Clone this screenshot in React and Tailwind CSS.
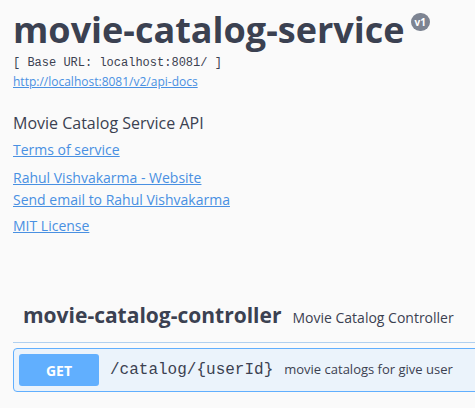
const sans = { fontFamily: '"Open Sans", sans-serif' };

const Link = ({ children, className = '' }) => (
  <a href="#" className={`text-[#4990e2] underline ${className}`}>
    {children}
  </a>
);

export default function App() {
  return (
    <div className="min-h-[408px] w-[475px] overflow-hidden bg-[#fafafa] text-[#3b4151] font-['Open_Sans',sans-serif]">
      <div className="pl-[13px] pt-[8px]">
        <div className="flex items-start">
          <h1 className="text-[36px] font-bold leading-[44px] tracking-[0px]">movie-catalog-service</h1>
          <span className="ml-[6px] mt-[5px] rounded-[57px] bg-[#7d8492] px-[4px] py-[2px] text-[10px] font-bold leading-[14px] text-white">
            v1
          </span>
        </div>
        <div className="mt-[3px] font-['Liberation_Mono',monospace] text-[12px] leading-[16px] text-[#3b4151]">
          [ Base URL: localhost:8081/ ]
        </div>
        <div className="mt-[2px] text-[12px] leading-[18px]">
          <Link>http://localhost:8081/v2/api-docs</Link>
        </div>
        <p className="mt-[21px] text-[16px] leading-[22px]">Movie Catalog Service API</p>
        <div className="mt-[6px] text-[14px] leading-[20px]">
          <Link>Terms of service</Link>
        </div>
        <div className="mt-[7px] flex flex-col text-[14px] leading-[22px]">
          <Link className="self-start">Rahul Vishvakarma - Website</Link>
          <Link className="self-start">Send email to Rahul Vishvakarma</Link>
        </div>
        <div className="mt-[5px] text-[14px] leading-[20px]">
          <Link>MIT License</Link>
        </div>
      </div>

      <div className="mt-[64px] pl-[13px]">
        <div className="flex w-[800px] items-baseline border-b border-[#b0d0f0] pb-[12px] pl-[10px]">
          <h3 className="text-[21px] font-bold leading-[30px]">movie-catalog-controller</h3>
          <span className="ml-[11px] text-[14px]">Movie Catalog Controller</span>
        </div>
        <div className="mt-[5px] flex w-[800px] items-center rounded-[4px] border border-[#61affe] bg-[#ebf3fb] p-[5px]">
          <span className="flex h-[32px] w-[80px] items-center justify-center rounded-[3px] bg-[#61affe] text-[14px] font-bold text-white">
            GET
          </span>
          <span className="ml-[11px] font-['Liberation_Mono',monospace] text-[16px] text-[#3b4151]">/catalog/{'{userId}'}</span>
          <span className="ml-[11px] text-[13px]" style={sans}>movie catalogs for give user</span>
        </div>
      </div>
    </div>
  );
}
